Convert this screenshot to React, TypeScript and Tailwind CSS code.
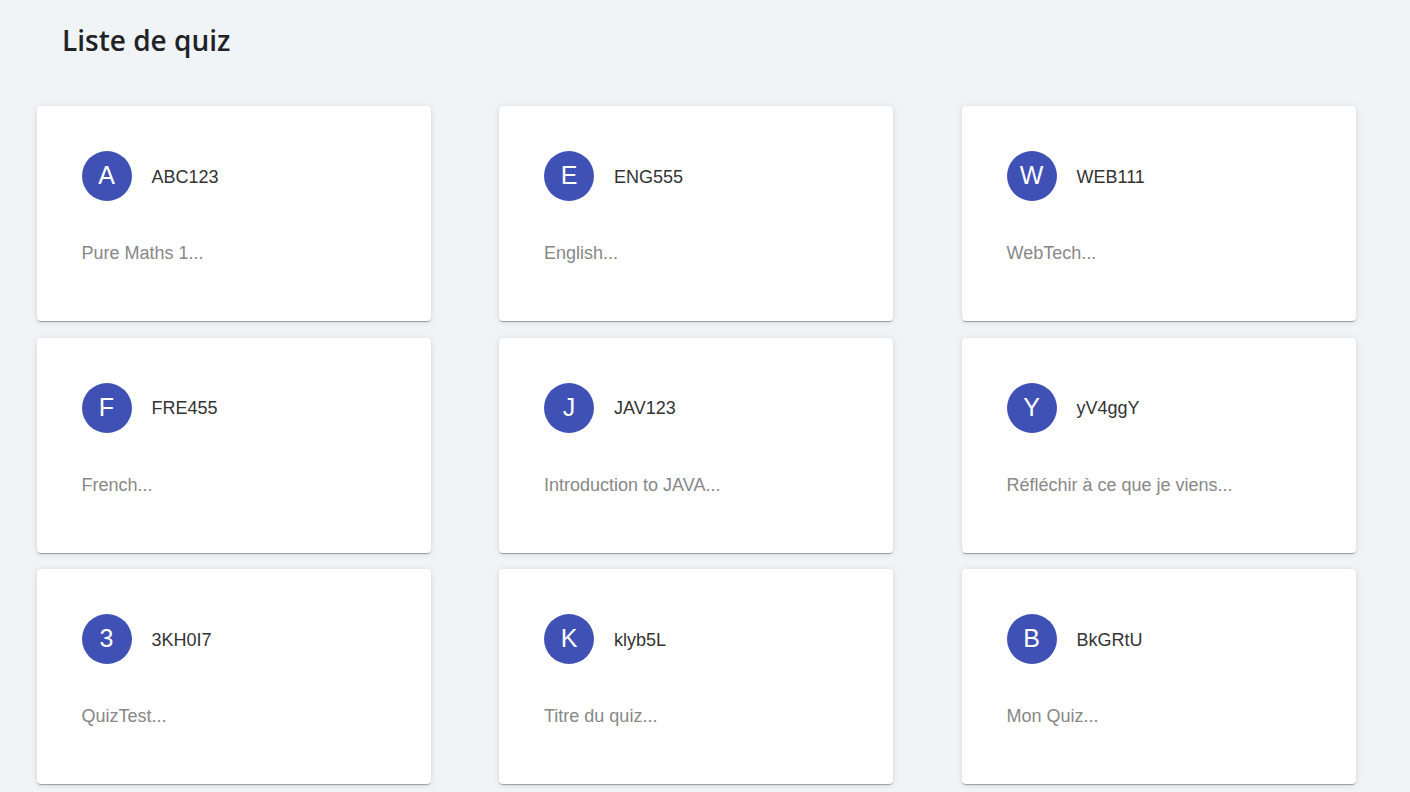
const quizzes = [
  { code: 'ABC123', title: 'Pure Maths 1...' },
  { code: 'ENG555', title: 'English...' },
  { code: 'WEB111', title: 'WebTech...' },
  { code: 'FRE455', title: 'French...' },
  { code: 'JAV123', title: 'Introduction to JAVA...' },
  { code: 'yV4ggY', title: 'Réfléchir à ce que je viens...' },
  { code: '3KH0I7', title: 'QuizTest...' },
  { code: 'klyb5L', title: 'Titre du quiz...' },
  { code: 'BkGRtU', title: 'Mon Quiz...' },
]

function QuizCard({ code, title }: { code: string; title: string }) {
  return (
    <div className="h-[215px] bg-white rounded-[4px] shadow-[0_2px_1px_-1px_rgba(0,0,0,0.2),0_1px_1px_0_rgba(0,0,0,0.14),0_1px_6px_0_rgba(0,0,0,0.12)] pt-[45px] px-[45px]">
      <div className="flex items-center gap-5">
        <div className="w-[50px] h-[50px] rounded-full bg-[#3f51b5] text-white flex items-center justify-center text-[25px]">
          {code[0].toUpperCase()}
        </div>
        <span className="text-[18px] leading-[24px] pt-[1px] text-[#333]">{code}</span>
      </div>
      <p className="mt-[36px] text-[18px] leading-[32px] text-[#888]">{title}</p>
    </div>
  )
}

export default function App() {
  return (
    <div className="min-h-[792px] bg-[#f0f4f7] font-['Liberation_Sans',Arial,sans-serif]">
      <h1 className="pl-[62px] pt-[20px] text-[28px] leading-[40px] font-semibold text-[#1f2327] font-['Open_Sans',sans-serif]">
        Liste de quiz
      </h1>
      <div className="grid grid-cols-3 w-[1319px] ml-[36.5px] mt-[46px] gap-x-[68.5px] gap-y-[16.5px]">
        {quizzes.map(q => (
          <QuizCard key={q.code} code={q.code} title={q.title} />
        ))}
      </div>
    </div>
  )
}
